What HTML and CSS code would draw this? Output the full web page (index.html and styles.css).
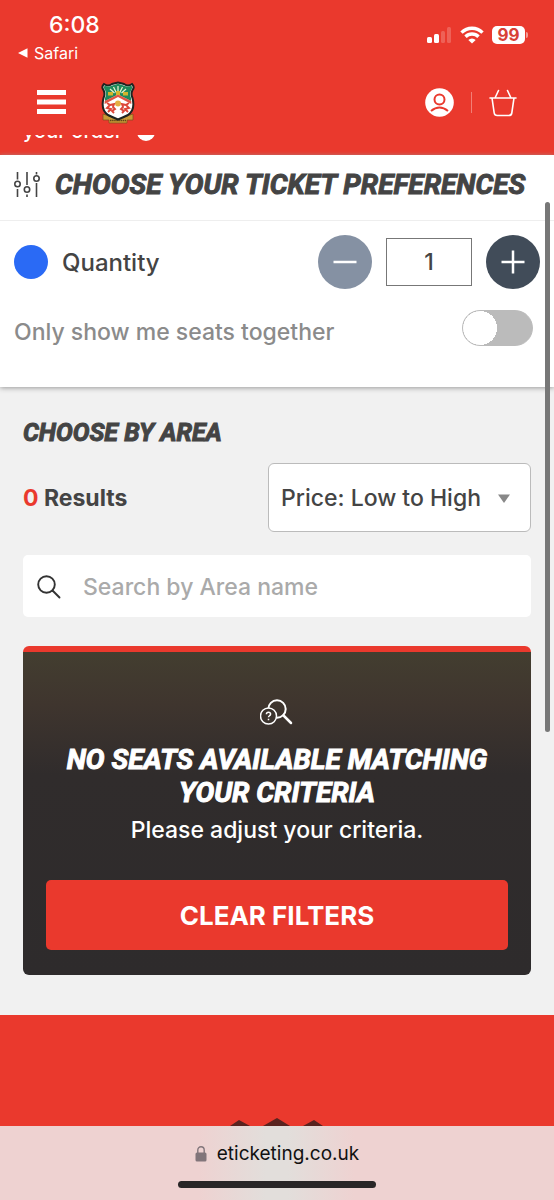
FILE: index.html
```html
<!DOCTYPE html>
<html lang="en">
<head>
<meta charset="utf-8">
<meta name="viewport" content="width=device-width, initial-scale=1">
<title>Choose your tickets</title>
<link rel="stylesheet" href="styles.css">
</head>
<body>
<header class="header">
  <div class="status">
    <div class="status-left">
      <span class="clock">6:08</span>
      <a class="back" href="#"><svg width="10" height="10" viewBox="0 0 10 10" fill="#fff"><path d="M0 5 9.500 .2v9.600z"/></svg>Safari</a>
    </div>
    <div class="status-right">
      <svg width="25" height="18" viewBox="0 0 25 18" fill="#fff"><rect x="0" y="11" width="5" height="6" rx="1.500"/><rect x="7" y="8" width="5" height="9" rx="1.500"/><g opacity=".2"><rect x="14" y="5" width="4" height="12" rx="1.500"/><rect x="20" y="1" width="4" height="16" rx="1.500"/></g></svg>
      <svg width="24" height="18" viewBox="0 0 24 18" fill="none" stroke="#fff" stroke-width="3.400"><path d="M1.500 6.600a15 15 0 0 1 21 0M5.500 10.700a9.200 9.200 0 0 1 13 0"/><path d="M12 17.500 8.300 14a5.200 5.200 0 0 1 7.400 0z" fill="#fff" stroke="none"/></svg>
      <span class="battery"><span class="battery-level">99</span><span class="battery-cap"></span></span>
    </div>
  </div>
  <nav class="nav" aria-label="Main">
    <button class="icon-button" aria-label="Menu"><svg width="30" height="26" viewBox="0 0 30 26" fill="#fff"><path d="M0 0h29v5H0zM0 9.500h29v5H0zM0 19h29v5H0z"/></svg></button>
    <a class="crest" href="#" aria-label="Home"><svg width="34" height="44" viewBox="0 0 34 44">
      <path d="M2 33v6h6v3h18v-3h6v-6l-6 2-9 3-9-3z" fill="#c99a35" stroke="#7d4d1c" stroke-width=".7"/>
      <path d="M9 39.500h16" stroke="#5f4519" stroke-width="1.500" stroke-dasharray="1.500 .6"/>
      <path d="M3 3q4 3 8 0l6-1.500L23 3q4 3 8 0 3 3 .5 6-2 4 0 8 3 12-4.500 17-4 2-10 4.500Q11 36 7 34-.5 29 2.500 17q2-4 0-8Q0 6 3 3z" fill="#fff" stroke="#1d2421" stroke-width="2"/>
      <path d="M3.800 4.500q3.500 2 7.500 0L17 2.800l5.700 1.700q4 2 7.500 0 1.800 2 0 4.500-2 4-.2 8v3L17 13.500 4 20v-3q2-4 0-8-2-2.500-.2-4.500z" fill="#20895b"/>
      <path d="m3.700 20 13.300-6.500L30.300 20v3L17 16 3.600 23z" fill="#df5545"/>
      <path d="M17 12V5m-1.500 7-3-6m6 6 3-6m-8 6L9 8m11.500 4L25 8" stroke="#e4f0cd" stroke-width="1.300" fill="none"/>
      <path d="M7 11h5v3.500H7zM15 10h4v4h-4zM22 11h5v3.500h-5z" fill="#d3b52e"/>
      <circle cx="17" cy="22.500" r="3" fill="#e4ae43"/>
      <g fill="none" stroke="#dc4639" stroke-width="1.900"><path d="m6 22 3 2-3 3 4 1-3 3m2-7 4-1-1 3 2 2-3 2 2 2M28 22l-3 2 3 3-4 1 3 3m-2-7-4-1 1 3-2 2 3 2-2 2"/></g>
    </svg></a>
    <span class="nav-space"></span>
    <button class="icon-button" aria-label="Account"><svg width="29" height="29" viewBox="0 0 29 29"><circle cx="14.500" cy="14.500" r="14.300" fill="#fff"/><g fill="none" stroke="#ea392d" stroke-width="2"><circle cx="14.500" cy="11.500" r="5"/><path d="M6 23q8.500-7 17 0"/></g></svg></button>
    <span class="nav-divider"></span>
    <button class="icon-button" aria-label="Basket"><svg width="28" height="28" viewBox="0 0 28 28" fill="none" stroke="#fff" stroke-width="1.600" stroke-linecap="round" stroke-linejoin="round"><path d="M1 9h26M3 9l2.200 15q.4 2.500 3 2.500h11.600q2.600 0 3-2.500L25 9M6 9l3.500-7.500M22 9l-3.500-7.500"/></svg></button>
  </nav>
  <div class="notice"><span>your order</span><span class="notice-icon"></span></div>
</header>

<main>
  <section class="prefs">
    <div class="prefs-head">
      <svg width="26" height="26" viewBox="0 0 26 26" fill="none" stroke="#444" stroke-width="1.600"><circle cx="3.500" cy="12" r="2.700"/><circle cx="13" cy="17.500" r="2.700"/><circle cx="22.500" cy="6.500" r="2.700"/><path d="M3.500 0v7.500M3.500 17v8M13 0v13M13 22.500V25M22.500 0v2.500M22.500 11v14"/></svg>
      <h1 class="display">Choose your ticket preferences</h1>
    </div>
    <div class="quantity">
      <span class="dot"></span>
      <label class="quantity-label" for="qty">Quantity</label>
      <button class="round round-muted" aria-label="Decrease"><svg width="24" height="24" viewBox="0 0 24 24" stroke="#fff" stroke-width="2.500"><path d="M.5 12h23"/></svg></button>
      <input class="qty" id="qty" type="text" value="1">
      <button class="round" aria-label="Increase"><svg width="24" height="24" viewBox="0 0 24 24" stroke="#fff" stroke-width="2.500"><path d="M.5 12h23M12 .5v23"/></svg></button>
    </div>
    <div class="together">
      <label class="together-label" for="together">Only show me seats together</label>
      <input class="toggle" id="together" type="checkbox">
    </div>
  </section>

  <section class="areas">
    <h2 class="display">Choose by area</h2>
    <div class="results">
      <p class="count"><span class="count-number">0</span> Results</p>
      <div class="sort">
        <select class="sort-select" aria-label="Sort by"><option>Price: Low to High</option></select>
        <svg class="sort-arrow" width="12" height="9" viewBox="0 0 12 9"><path d="M0 .5h12L6 9z" fill="#888"/></svg>
      </div>
    </div>
    <div class="search">
      <svg width="24" height="24" viewBox="0 0 24 24" fill="none" stroke="#333" stroke-width="1.900" stroke-linecap="round"><circle cx="9.500" cy="9.500" r="8.300"/><path d="m15.500 15.500 7 7"/></svg>
      <input class="search-input" type="text" aria-label="Search by Area name" placeholder="Search by Area name">
    </div>
    <div class="empty">
      <svg width="34" height="28" viewBox="0 0 34 28" fill="none" stroke="#fff" stroke-width="2"><circle cx="17" cy="10" r="8.700"/><path d="m23.500 16.500 7.500 7.500" stroke-width="2.500" stroke-linecap="round"/><circle cx="8.500" cy="17" r="8" fill="#3c342e" stroke-width="1.500"/><path d="M6.400 15.300q.1-2 2.100-2t2.100 1.800q0 1.200-1.200 1.700-.9.500-.9 1.500M8.500 19.700v1.600" stroke-width="1.500"/></svg>
      <h3 class="display">No seats available matching your criteria</h3>
      <p class="empty-text">Please adjust your criteria.</p>
      <button class="clear">CLEAR FILTERS</button>
    </div>
  </section>
</main>

<footer class="footer">
  <svg width="94" height="70" viewBox="0 0 94 70"><path d="M0 8 9 2l11 6zM33 8 47 0l13 8zM73 8l11-6 9 6z" fill="#59231f"/></svg>
</footer>

<div class="scroll-thumb"></div>
<div class="browser-bar">
  <a class="address" href="#"><svg width="12" height="16" viewBox="0 0 12 16"><rect x=".5" y="6.500" width="11" height="9" rx="1.500" fill="#81757a"/><path d="M2.800 7V4a3.200 3.200 0 0 1 6.400 0v3" fill="none" stroke="#81757a" stroke-width="1.400"/></svg>eticketing.co.uk</a>
  <span class="home-indicator"></span>
</div>
</body>
</html>
```
FILE: styles.css
```css
* {
  box-sizing: border-box;
}

body {
  margin: 0;
  min-height: 100vh;
  display: flex;
  flex-direction: column;
  background: #f1f1f1;
  color: #444;
  font: 500 23px/28px Inter, "Liberation Sans", sans-serif;
}

h1, h2, h3, p {
  margin: 0;
}

button {
  border: 0;
  padding: 0;
  font: inherit;
  color: #fff;
}

svg {
  display: block;
  flex: none;
}

.display {
  font: italic 700 28px/33px Roboto, sans-serif;
  text-transform: uppercase;
  -webkit-text-stroke: 1px currentColor;
}

.header {
  background: #ea392d;
  color: #fff;
}

.status {
  display: flex;
  justify-content: space-between;
  height: 70px;
  padding: 11px 26px 0 18px;
}

.status-left {
  display: flex;
  flex-direction: column;
}

.clock {
  padding-left: 31px;
}

.back {
  display: flex;
  align-items: center;
  gap: 6px;
  color: #fff;
  font-size: 16px;
  font-weight: 400;
  text-decoration: none;
}

.status-right {
  display: flex;
  align-items: center;
  gap: 8px;
  height: 48px;
}

.battery {
  display: flex;
  align-items: center;
  gap: 1px;
}

.battery-level {
  width: 33px;
  border-radius: 5px;
  background: #fff;
  color: #d84035;
  font-size: 17px;
  font-weight: 700;
  line-height: 18px;
  text-align: center;
}

.battery-cap {
  width: 2px;
  height: 6px;
  border-radius: 0 2px 2px 0;
  background: #f39b95;
}

.nav {
  display: flex;
  align-items: center;
  height: 65px;
  padding: 0 37px;
}

.icon-button {
  background: none;
}

.crest {
  margin-left: 34px;
}

.nav-space {
  flex: 1;
}

.nav-divider {
  width: 1px;
  height: 21px;
  margin: 0 17px;
  background: #f27f76;
}

.notice {
  display: flex;
  align-items: flex-end;
  gap: 14px;
  height: 20px;
  padding: 0 23px 10px;
  overflow: hidden;
  font-size: 20px;
}

.notice-icon {
  width: 18px;
  height: 18px;
  margin-bottom: 4px;
  border-radius: 50%;
  background: #fff;
}

.prefs {
  position: relative;
  padding-bottom: 41px;
  background: #fff;
  box-shadow: 0 1px 5px #999;
}

.prefs-head {
  display: flex;
  align-items: center;
  gap: 15px;
  padding: 13px 14px 19px;
  border-bottom: 1px solid #eee;
}

.quantity {
  display: flex;
  align-items: center;
  gap: 14px;
  padding: 14px 14px 0;
}

.dot {
  width: 34px;
  height: 34px;
  border-radius: 50%;
  background: #2a6af5;
}

.quantity-label {
  flex: 1;
  padding-top: 2px;
  font-size: 24px;
}

.round {
  display: grid;
  place-items: center;
  width: 54px;
  height: 54px;
  border-radius: 50%;
  background: #414c59;
}

.round-muted {
  background: #8591a3;
}

.qty {
  width: 86px;
  height: 48px;
  border: 1px solid #777;
  color: #444;
  font: inherit;
  text-align: center;
}

.together {
  display: flex;
  align-items: center;
  justify-content: space-between;
  padding: 21px 21px 0 14px;
  color: #8b8b8b;
}

.together-label {
  padding-top: 8px;
}

.toggle {
  appearance: none;
  width: 71px;
  height: 36px;
  margin: 0;
  border: 1px solid #bbb;
  border-radius: 18px;
  background: radial-gradient(circle at 17px 17px, #fff 17px, #bbb 17px);
}

.areas {
  padding: 29px 23px 40px;
}

.areas h2 {
  font-size: 25px;
}

.results {
  display: flex;
  align-items: center;
  justify-content: space-between;
  margin-top: 14px;
}

.count {
  font-weight: 700;
}

.count-number {
  color: #ea392d;
}

.sort {
  position: relative;
}

.sort-select {
  appearance: none;
  width: 263px;
  height: 69px;
  padding: 0 12px;
  border: 1px solid #bbb;
  border-radius: 6px;
  background: #fff;
  color: #444;
  font: inherit;
}

.sort-arrow {
  position: absolute;
  top: 31px;
  right: 21px;
  pointer-events: none;
}

.search {
  display: flex;
  align-items: center;
  gap: 22px;
  margin-top: 23px;
  padding: 18px 14px 16px;
  border-radius: 5px;
  background: #fff;
}

.search-input {
  flex: 1;
  min-width: 0;
  padding: 0;
  border: 0;
  font: inherit;
  color: #444;
}

.search-input::placeholder {
  color: #aaa;
}

.empty {
  display: flex;
  flex-direction: column;
  align-items: center;
  margin-top: 29px;
  padding: 47px 23px 25px;
  border-top: 6px solid #ea392d;
  border-radius: 6px;
  background: linear-gradient(#433e30, #3f352e 16%, #302c2c 38%, #2e2b2c);
  color: #fff;
  text-align: center;
}

.empty h3 {
  margin-top: 16px;
}

.empty-text {
  margin-top: 7px;
}

.clear {
  width: 100%;
  margin-top: 36px;
  padding: 22px 0 20px;
  border-radius: 5px;
  background: #ea392d;
  font-size: 26px;
  font-weight: 700;
}

.footer {
  display: flex;
  flex: 1;
  justify-content: center;
  max-height: 185px;
  padding-top: 103px;
  overflow: hidden;
  background: #ea392d;
}

.scroll-thumb {
  position: fixed;
  top: 202px;
  right: 4px;
  width: 5px;
  height: 530px;
  border-radius: 3px;
  background: #777;
}

.browser-bar {
  position: fixed;
  right: 0;
  bottom: 0;
  left: 0;
  display: flex;
  flex-direction: column;
  align-items: center;
  gap: 13px;
  padding: 14px 0 12px;
  background: linear-gradient(90deg, #eed2d1 36%, #e2dedb 48%, #e2dedb 52%, #eed2d1 64%);
}

.address {
  display: flex;
  align-items: center;
  gap: 10px;
  color: #111;
  font-size: 19px;
  font-weight: 400;
  text-decoration: none;
}

.home-indicator {
  width: 198px;
  height: 7px;
  border-radius: 4px;
  background: #292627;
}
```
